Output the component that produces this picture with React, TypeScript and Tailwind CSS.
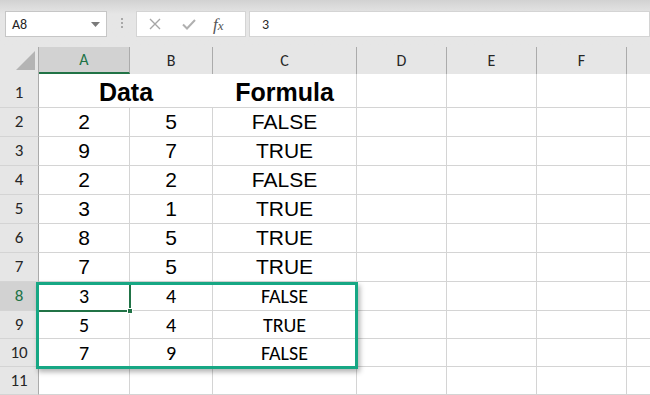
import React from 'react'

const cols = [
  { name: 'A', w: 91 },
  { name: 'B', w: 83 },
  { name: 'C', w: 144 },
  { name: 'D', w: 90 },
  { name: 'E', w: 90 },
  { name: 'F', w: 90 },
  { name: '', w: 40 },
]

type Row = { n: number; h: number; cells: string[]; kind: 'head' | 'big' | 'small' | 'empty' }

const rows: Row[] = [
  { n: 1, h: 34, cells: ['Data', '', 'Formula'], kind: 'head' },
  { n: 2, h: 29, cells: ['2', '5', 'FALSE'], kind: 'big' },
  { n: 3, h: 29, cells: ['9', '7', 'TRUE'], kind: 'big' },
  { n: 4, h: 29, cells: ['2', '2', 'FALSE'], kind: 'big' },
  { n: 5, h: 29, cells: ['3', '1', 'TRUE'], kind: 'big' },
  { n: 6, h: 29, cells: ['8', '5', 'TRUE'], kind: 'big' },
  { n: 7, h: 29, cells: ['7', '5', 'TRUE'], kind: 'big' },
  { n: 8, h: 29, cells: ['3', '4', 'FALSE'], kind: 'small' },
  { n: 9, h: 28, cells: ['5', '4', 'TRUE'], kind: 'small' },
  { n: 10, h: 28, cells: ['7', '9', 'FALSE'], kind: 'small' },
  { n: 11, h: 28, cells: [], kind: 'empty' },
]

const calibri = "font-['Carlito','Lato','Noto_Sans',sans-serif]"

function Toolbar() {
  return (
    <div className="h-[47px] bg-gradient-to-b from-[#d2d2d2] via-[#e6e6e6] via-30% to-[#e6e6e6] flex items-start pt-[11px]">
      <div className="ml-[5px] w-[102px] h-[26px] bg-white border border-[#c6c6c6] flex items-center justify-between pl-[6px] pr-[6px]">
        <span className={`${calibri} text-[14px] text-[#262626]`}>A8</span>
        <svg width="9" height="5" viewBox="0 0 9 5"><path d="M0 0h9L4.5 5z" fill="#7a7a7a" /></svg>
      </div>
      <div className="ml-[14px] mt-[7px] flex flex-col gap-[2px]">
        <div className="w-[2px] h-[2px] bg-[#a8a8a8]" />
        <div className="w-[2px] h-[2px] bg-[#a8a8a8]" />
        <div className="w-[2px] h-[2px] bg-[#a8a8a8]" />
      </div>
      <div className="ml-[13px] w-[110px] h-[26px] bg-white border border-[#d4d4d4] flex items-center">
        <svg className="ml-[12px]" width="12" height="12" viewBox="0 0 12 12">
          <path d="M1 1l10 10M11 1L1 11" stroke="#a6a6a6" strokeWidth="1.4" />
        </svg>
        <svg className="ml-[21px]" width="14" height="11" viewBox="0 0 14 11">
          <path d="M1 5.5l4 4L13 1" stroke="#b0b0b0" strokeWidth="2" fill="none" />
        </svg>
        <span className="ml-[17px] font-['Liberation_Serif',serif] italic text-[17px] leading-none text-[#555]">
          f<span className="text-[13px]">x</span>
        </span>
      </div>
      <div className="ml-[3px] flex-1 h-[26px] bg-white border border-[#d4d4d4] flex items-center pl-[12px]">
        <span className={`${calibri} text-[14px] text-[#262626]`}>3</span>
      </div>
    </div>
  )
}

function cellText(kind: Row['kind']) {
  if (kind === 'head') return "font-['Liberation_Sans',Arial,sans-serif] font-bold text-[25px] text-black pt-[4px]"
  if (kind === 'big') return "font-['Liberation_Sans',Arial,sans-serif] text-[21px] text-black"
  return `${calibri} text-[20px] text-black`
}

export default function App() {
  return (
    <div className="w-[650px] h-[395px] overflow-hidden bg-white select-none">
      <Toolbar />
      <div className="relative">
        {/* column headers */}
        <div className="flex h-[27px] bg-[#e6e6e6]">
          <div className="w-[39px] shrink-0 relative border-r border-[#ababab]">
            <svg className="absolute right-[3px] bottom-[4px]" width="19" height="19" viewBox="0 0 19 19">
              <path d="M19 0V19H0z" fill="#b4b4b4" />
            </svg>
          </div>
          {cols.map((c, i) => (
            <div
              key={i}
              style={{ width: c.w }}
              className={`shrink-0 flex items-center justify-center ${calibri} text-[16px] ${
                c.name === 'A'
                  ? 'bg-[#d2d2d2] text-[#217346] border-b-2 border-[#217346] border-r border-r-[#ababab]'
                  : 'text-[#262626] border-r border-[#ababab]'
              }`}
            >
              {c.name}
            </div>
          ))}
        </div>
        {/* rows */}
        {rows.map(r => (
          <div key={r.n} className="flex" style={{ height: r.h }}>
            <div
              className={`w-[39px] shrink-0 flex items-center justify-center ${calibri} text-[17px] border-r border-r-[#ababab] border-b border-b-[#d4d4d4] ${
                r.n === 1 ? 'pt-[4px] ' : ''
              }${r.n === 8 ? 'bg-[#d2d2d2] text-[#217346]' : 'bg-[#e6e6e6] text-[#262626]'}`}
            >
              {r.n}
            </div>
            {cols.map((c, i) => {
              const t = r.cells[i] || ''
              const span = r.kind === 'head' && i === 0
              if (r.kind === 'head' && i === 1) return null
              return (
                <div
                  key={i}
                  style={{ width: span ? c.w + cols[1].w : c.w }}
                  className={`shrink-0 flex items-center justify-center border-b border-[#d4d4d4] ${
                    span ? '' : 'border-r'
                  } ${cellText(r.kind)}`}
                >
                  {t}
                </div>
              )
            })}
          </div>
        ))}
        {/* active cell A8 */}
        <div className="absolute left-[39px] top-[235px] w-[92px] h-[30px] border-r-2 border-b-2 border-[#217346]" />
        <div className="absolute left-[127px] top-[261px] w-[6px] h-[6px] bg-[#217346] border border-white" />
        {/* highlight box */}
        <div className="absolute left-[36px] top-[235px] w-[322px] h-[87px] border-[3px] border-[#17a784] shadow-[2px_3px_5px_rgba(0,0,0,0.3)]" />
      </div>
    </div>
  )
}
